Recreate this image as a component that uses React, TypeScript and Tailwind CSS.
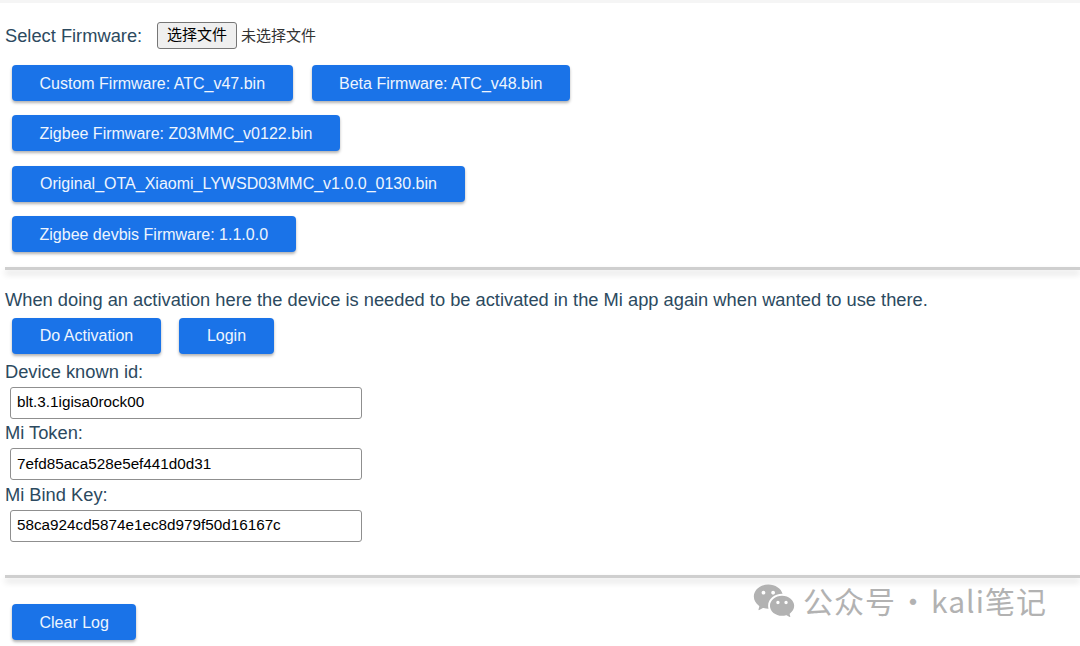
import { RiWechatFill } from "react-icons/ri";

const sans = "font-['Liberation_Sans',Arial,'Noto_Sans_CJK_SC',sans-serif]";

function Btn({ children, className = "" }: { children: string; className?: string }) {
  return (
    <button className={`h-9 rounded bg-[#1a73e8] px-[27.5px] pt-px text-[16px] leading-[35px] text-[#eef5fe] shadow-[0_2px_3px_rgba(0,0,0,0.3)] whitespace-nowrap ${className}`}>
      {children}
    </button>
  );
}

function Rule() {
  return <div className="h-[3px] bg-[#cfcfcf] shadow-[0_4px_6px_rgba(0,0,0,0.16)]" />;
}

function Field({ label, value }: { label: string; value: string }) {
  return (
    <div>
      <div className="h-[24px] pt-px text-[18.3px] leading-[24px] text-[#2c4a60]">{label}</div>
      <div className="ml-[5px] mt-[4px] flex h-[32px] w-[352px] items-center rounded-[3px] border border-[#8f8f8f] bg-white pl-[6px] text-[15.25px] text-black">
        {value}
      </div>
    </div>
  );
}

export default function App() {
  return (
    <div className={`relative h-[646px] w-[1080px] overflow-hidden bg-white ${sans}`}>
      <div className="h-[3px] bg-[#f5f5f5]" />
      <div className="pl-[5px]">
        <div className="mt-[19px] flex h-[27px] items-center text-[18.3px] text-[#2c4a60]">
          <span className="w-[152px] pt-px">Select Firmware:</span>
          <span className="flex h-[27px] w-[80px] items-center justify-center rounded-[3px] border border-[#767676] bg-[#efefef] text-[15px] text-black">选择文件</span>
          <span className="ml-[4px] pt-[2px] text-[15px] text-[#333]">未选择文件</span>
        </div>
        <div className="ml-[7px] mt-[16px] flex flex-col items-start gap-[14.4px]">
          <div className="flex gap-[19px]">
            <Btn>Custom Firmware: ATC_v47.bin</Btn>
            <Btn>Beta Firmware: ATC_v48.bin</Btn>
          </div>
          <Btn>Zigbee Firmware: Z03MMC_v0122.bin</Btn>
          <Btn className="w-[453px] !pt-0">Original_OTA_Xiaomi_LYWSD03MMC_v1.0.0_0130.bin</Btn>
          <Btn>Zigbee devbis Firmware: 1.1.0.0</Btn>
        </div>
        <div className="mt-[14.4px]"><Rule /></div>
        <div className="mt-[18px] h-[24px] text-[18.3px] leading-[24px] text-[#2c4a60] whitespace-nowrap">
          When doing an activation here the device is needed to be activated in the Mi app again when wanted to use there.
        </div>
        <div className="ml-[7px] mt-[6px] flex gap-[18px]">
          <Btn className="w-[149px] !pt-0">Do Activation</Btn>
          <Btn className="w-[95px] !pt-0">Login</Btn>
        </div>
        <div className="mt-[5px] flex flex-col gap-[1.5px]">
          <Field label="Device known id:" value="blt.3.1igisa0rock00" />
          <Field label="Mi Token:" value="7efd85aca528e5ef441d0d31" />
          <Field label="Mi Bind Key:" value="58ca924cd5874e1ec8d979f50d16167c" />
        </div>
        <div className="mt-[33px]"><Rule /></div>
        <div className="ml-[7px] mt-[26px]">
          <Btn>Clear Log</Btn>
        </div>
      </div>
      <div className="absolute left-[752px] top-[578px] flex items-center gap-[7px] whitespace-nowrap text-[30px] text-[#b2b2b2] font-['Noto_Sans_CJK_SC',sans-serif]">
        <RiWechatFill className="h-[44px] w-[44px] text-[#b2b2b2]" />
        <span className="tracking-[1px]">
          公众号<span className="mx-[2px]">·</span>kali笔记
        </span>
      </div>
    </div>
  );
}
